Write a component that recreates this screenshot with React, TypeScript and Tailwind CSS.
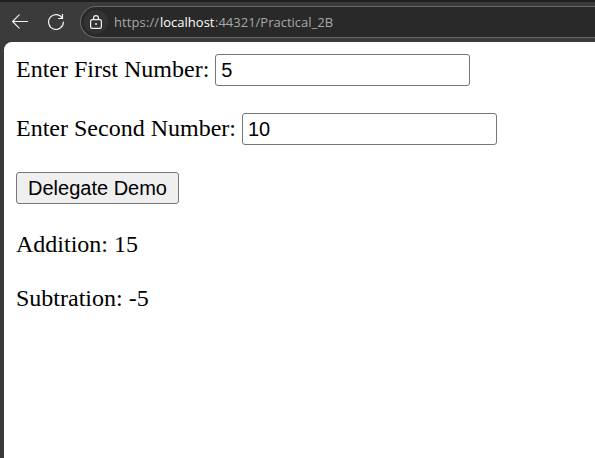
import type { ReactNode } from 'react';

function Toolbar() {
  return (
    <header className="flex h-[42px] shrink-0 items-start border-t-2 border-[#202020] bg-[#3b3b3b] pt-1 font-['Open_Sans',sans-serif]">
      <div className="flex h-8 w-20 shrink-0 items-center text-[#f2f2f2]">
        <svg className="ml-3 size-4" viewBox="0 0 16 16" fill="none" stroke="currentColor" strokeWidth="1.1" strokeLinecap="round" strokeLinejoin="round">
          <path d="M15.5 7.5H.6M7.2.9.6 7.5l6.6 6.6" />
        </svg>
        <svg className="ml-5 size-4" viewBox="0 0 16 16" fill="none" stroke="currentColor" strokeWidth="1.2" strokeLinecap="round" strokeLinejoin="round">
          <path d="M14.5 4.5A7.4 7.4 0 1 0 15.4 8M14.5 .5v4h-4" />
        </svg>
      </div>
      <div className="flex h-8 min-w-0 flex-1 items-center rounded-l-full border border-r-0 border-[#686868] bg-[#292929] pl-[3px]">
        <span className="flex size-6 shrink-0 items-center justify-center rounded-full bg-[#333333] text-[#f2f2f2]">
          <svg className="h-[14px] w-3" viewBox="0 0 12 14" fill="none" stroke="currentColor" strokeWidth="1.2">
            <rect x=".6" y="4.6" width="10.8" height="8.8" rx="1.6" />
            <path d="M3.6 4.6V3a2.4 2.4 0 0 1 4.8 0v1.6" />
            <circle cx="6" cy="9" r="1" fill="currentColor" stroke="none" />
          </svg>
        </span>
        <span className="ml-[6px] flex text-[13px] leading-5 text-[#a8a8a8]">
          <span className="w-[46px] tracking-[0.1px]">https://</span>
          <span className="w-[55px] text-white">localhost</span>
          <span>:44321/Practical_2B</span>
        </span>
      </div>
    </header>
  );
}

function Field({ label, value }: { label: string; value: string }) {
  return (
    <label className="flex h-8 items-center gap-[6px] whitespace-nowrap">
      <span className="pb-[2px]">{label}</span>
      <input
        type="text"
        defaultValue={value}
        className="h-8 w-[255px] rounded-[3px] border border-[#767676] bg-white px-[5px] font-['Liberation_Sans',Arial,sans-serif] text-[20px] text-black"
      />
    </label>
  );
}

function Result({ children }: { children: ReactNode }) {
  return <p className="h-[27px] leading-[27px]">{children}</p>;
}

export default function App() {
  return (
    <div className="flex h-[458px] w-[595px] flex-col overflow-hidden bg-[#3b3b3b]">
      <Toolbar />
      <div className="flex flex-1 bg-[#3b3936] pl-1 [background-image:linear-gradient(#3b3b3b,#3b3936)]">
        <main className="flex flex-1 flex-col items-start rounded-tl-lg bg-white pl-3 pt-3 font-['Liberation_Serif','Times_New_Roman',serif] text-[24px] leading-[27px] text-black">
          <Field label="Enter First Number:" value="5" />
          <div className="mt-[27px]">
            <Field label="Enter Second Number:" value="10" />
          </div>
          <button className="mt-[27px] h-8 w-[163px] rounded-[3px] border border-[#767676] bg-[#efefef] font-['Liberation_Sans',Arial,sans-serif] text-[20px] leading-[23px] text-black">
            Delegate Demo
          </button>
          <div className="mt-[27px] flex flex-col gap-[27px]">
            <Result>Addition: 15</Result>
            <Result>Subtration: -5</Result>
          </div>
        </main>
      </div>
    </div>
  );
}
